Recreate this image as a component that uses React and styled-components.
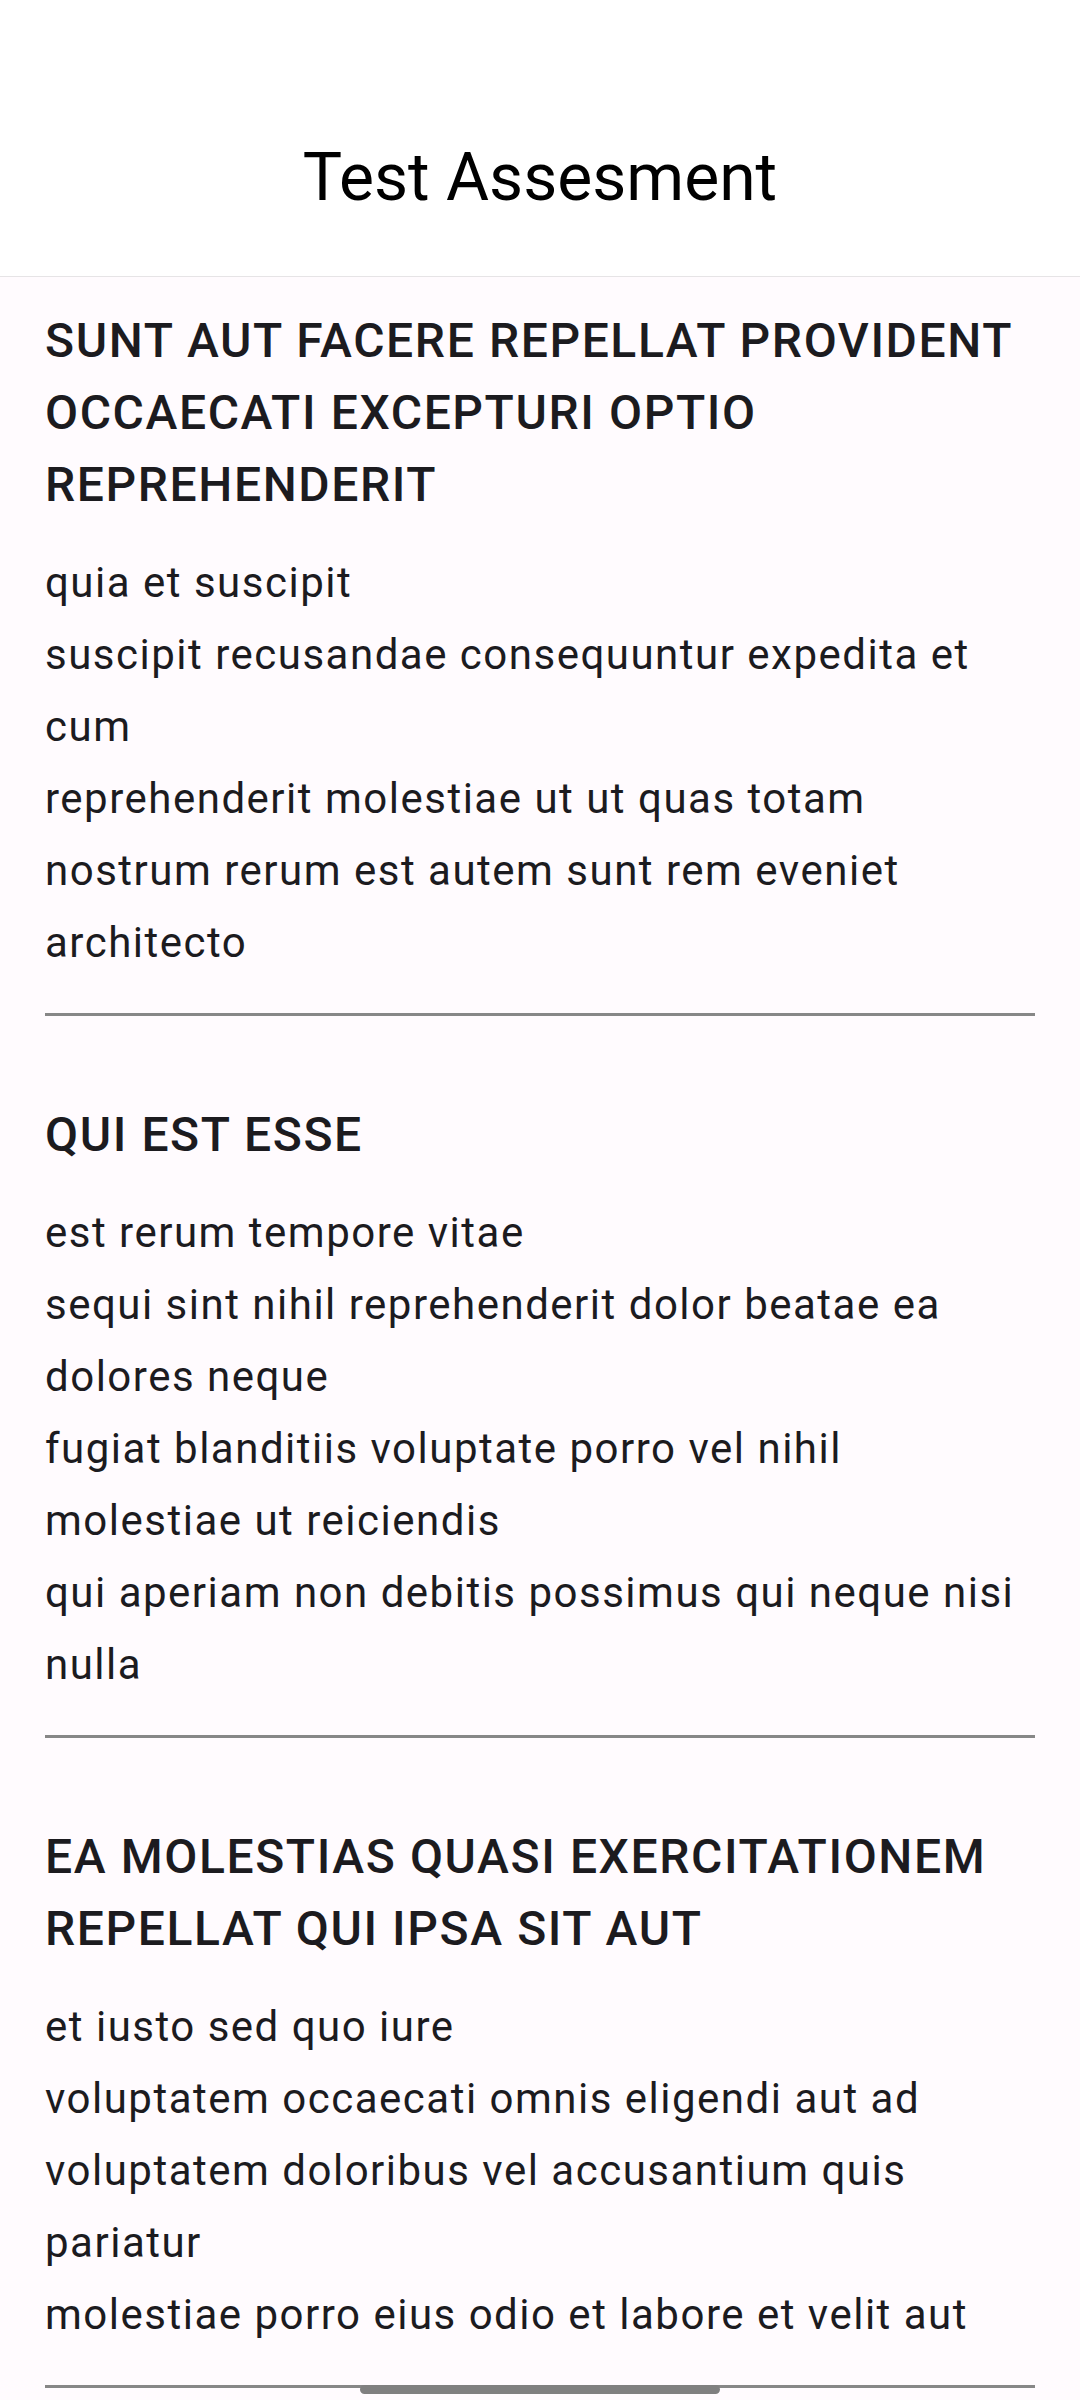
import React from "react";
import styled, { createGlobalStyle } from "styled-components";

const GlobalStyle = createGlobalStyle`
  html, body {
    margin: 0;
    padding: 0;
    background: #fffbfe;
  }
  body {
    font-family: Roboto, "Noto Sans", "Liberation Sans", sans-serif;
    -webkit-font-smoothing: antialiased;
  }
  * { box-sizing: border-box; }
`;

const Screen = styled.div`
  width: 1080px;
  min-height: 2400px;
  background: #fffbfe;
  display: flex;
  flex-direction: column;
`;

const Header = styled.header`
  height: 277px;
  background: #ffffff;
  border-bottom: 1px solid #e6e4e6;
  display: flex;
  align-items: flex-end;
  justify-content: center;
  padding-bottom: 60px;
`;

const Title = styled.h1`
  margin: 0;
  font-family: Roboto, sans-serif;
  font-weight: 400;
  font-size: 66px;
  line-height: 76px;
  color: #000000;
`;

const List = styled.main`
  display: flex;
  flex-direction: column;
  padding: 28px 45px 0;
`;

const Item = styled.article`
  display: flex;
  flex-direction: column;
`;

const Heading = styled.h2`
  margin: 0;
  font-family: Roboto, sans-serif;
  font-weight: 500;
  font-size: 48px;
  line-height: 72px;
  letter-spacing: 1.6px;
  text-transform: uppercase;
  color: #1c1b1f;
`;

const Body = styled.p`
  margin: 26px 0 0;
  font-family: Roboto, sans-serif;
  font-weight: 400;
  font-size: 42px;
  line-height: 72px;
  letter-spacing: 1.5px;
  color: #1c1b1f;
  white-space: pre-line;
`;

const Divider = styled.hr`
  margin: 34px 0 83px;
  border: none;
  height: 3px;
  background: #878787;
`;

const NavHandle = styled.div`
  position: fixed;
  left: 360px;
  top: 2385px;
  width: 360px;
  height: 9px;
  border-radius: 5px;
  background: #808080;
`;

const posts = [
  {
    title: "sunt aut facere repellat provident occaecati excepturi optio reprehenderit",
    body:
      "quia et suscipit\nsuscipit recusandae consequuntur expedita et cum\nreprehenderit molestiae ut ut quas totam\nnostrum rerum est autem sunt rem eveniet architecto",
  },
  {
    title: "qui est esse",
    body:
      "est rerum tempore vitae\nsequi sint nihil reprehenderit dolor beatae ea dolores neque\nfugiat blanditiis voluptate porro vel nihil molestiae ut reiciendis\nqui aperiam non debitis possimus qui neque nisi nulla",
  },
  {
    title: "ea molestias quasi exercitationem repellat qui ipsa sit aut",
    body:
      "et iusto sed quo iure\nvoluptatem occaecati omnis eligendi aut ad\nvoluptatem doloribus vel accusantium quis pariatur\nmolestiae porro eius odio et labore et velit aut",
  },
];

export default function App() {
  return (
    <>
      <GlobalStyle />
      <Screen>
        <Header>
          <Title>Test Assesment</Title>
        </Header>
        <List>
          {posts.map((p, i) => (
            <Item key={i}>
              <Heading>{p.title}</Heading>
              <Body>{p.body}</Body>
              <Divider />
            </Item>
          ))}
        </List>
      </Screen>
      <NavHandle />
    </>
  );
}
